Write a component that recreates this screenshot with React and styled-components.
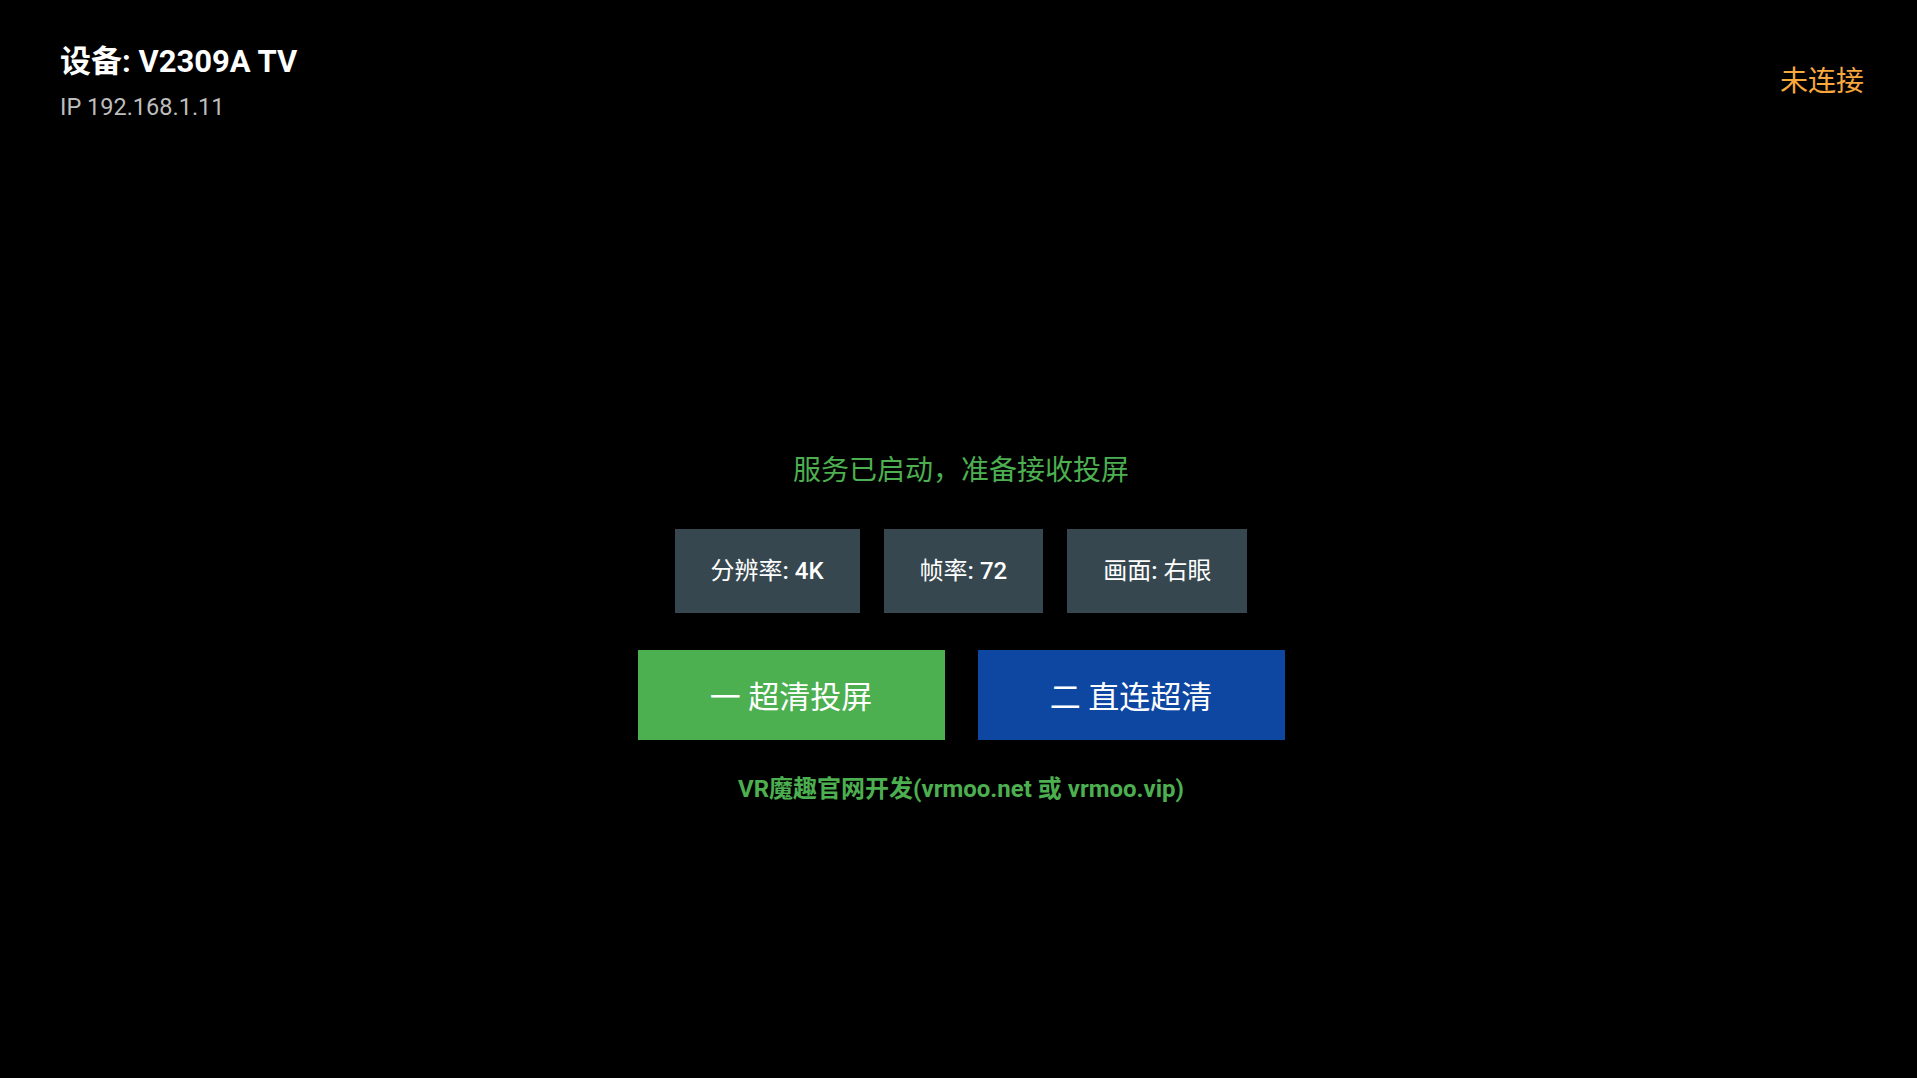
import React from "react";
import styled, { createGlobalStyle } from "styled-components";

const GlobalStyle = createGlobalStyle`
  html, body {
    margin: 0;
    padding: 0;
    background: #000;
  }
  body {
    font-family: "Roboto", "Noto Sans CJK SC", sans-serif;
    color: #fff;
  }
  * { box-sizing: border-box; }
`;

const Page = styled.div`
  width: 100vw;
  height: 100vh;
  background: #000;
  display: flex;
  flex-direction: column;
  overflow: hidden;
`;

const Header = styled.header`
  display: flex;
  justify-content: space-between;
  align-items: flex-start;
  padding: 43px 53px 0 60px;
`;

const DeviceInfo = styled.div`
  display: flex;
  flex-direction: column;
  gap: 13px;
`;

const DeviceName = styled.div`
  font-size: 31px;
  line-height: 37px;
  font-weight: 700;
  color: #fff;
`;

const DeviceIp = styled.div`
  font-size: 23.5px;
  line-height: 28px;
  color: #bdbdbd;
`;

const ConnState = styled.div`
  margin-top: 22px;
  font-size: 28px;
  line-height: 34px;
  color: #f9a83e;
`;

const Main = styled.main`
  display: flex;
  flex-direction: column;
  align-items: center;
  margin-top: 330px;
  padding-left: 5px;
`;

const Status = styled.div`
  font-size: 28px;
  line-height: 40px;
  color: #4caf50;
`;

const ChipRow = styled.div`
  display: flex;
  gap: 24px;
  margin-top: 38px;
`;

const Chip = styled.div`
  height: 84px;
  padding: 0 36px;
  display: flex;
  align-items: center;
  background: #37474f;
  color: #fff;
  font-size: 24px;
  font-weight: 400;
`;

const ChipText = styled.span`
  white-space: pre;
  line-height: 30px;
`;

const ChipLatin = styled.span`
  font-weight: 500;
`;

const ButtonRow = styled.div`
  display: flex;
  gap: 33px;
  margin-top: 37px;
`;

const ActionButton = styled.button`
  width: 307px;
  height: 90px;
  border: none;
  border-radius: 0;
  padding: 0 0 2px;
  background: ${(p) => (p.$tone === "blue" ? "#0d47a1" : "#4caf50")};
  color: #fff;
  font-family: "Roboto", "Noto Sans CJK SC", sans-serif;
  font-size: 31px;
  font-weight: 400;
  display: flex;
  align-items: center;
  justify-content: center;
  cursor: pointer;
  white-space: pre;
`;

const Footer = styled.div`
  margin-top: 33px;
  font-size: 24px;
  line-height: 32px;
  font-weight: 700;
  color: #4caf50;
`;

export default function App() {
  return (
    <>
      <GlobalStyle />
      <Page>
        <Header>
          <DeviceInfo>
            <DeviceName>设备: V2309A TV</DeviceName>
            <DeviceIp>IP 192.168.1.11</DeviceIp>
          </DeviceInfo>
          <ConnState>未连接</ConnState>
        </Header>
        <Main>
          <Status>服务已启动，准备接收投屏</Status>
          <ChipRow>
            <Chip>
              <ChipText>
                分辨率<ChipLatin>: 4K</ChipLatin>
              </ChipText>
            </Chip>
            <Chip>
              <ChipText>
                帧率<ChipLatin>: 72</ChipLatin>
              </ChipText>
            </Chip>
            <Chip>
              <ChipText>
                画面<ChipLatin>: </ChipLatin>右眼
              </ChipText>
            </Chip>
          </ChipRow>
          <ButtonRow>
            <ActionButton $tone="green">一 超清投屏</ActionButton>
            <ActionButton $tone="blue">二 直连超清</ActionButton>
          </ButtonRow>
          <Footer>VR魔趣官网开发(vrmoo.net 或 vrmoo.vip)</Footer>
        </Main>
      </Page>
    </>
  );
}
